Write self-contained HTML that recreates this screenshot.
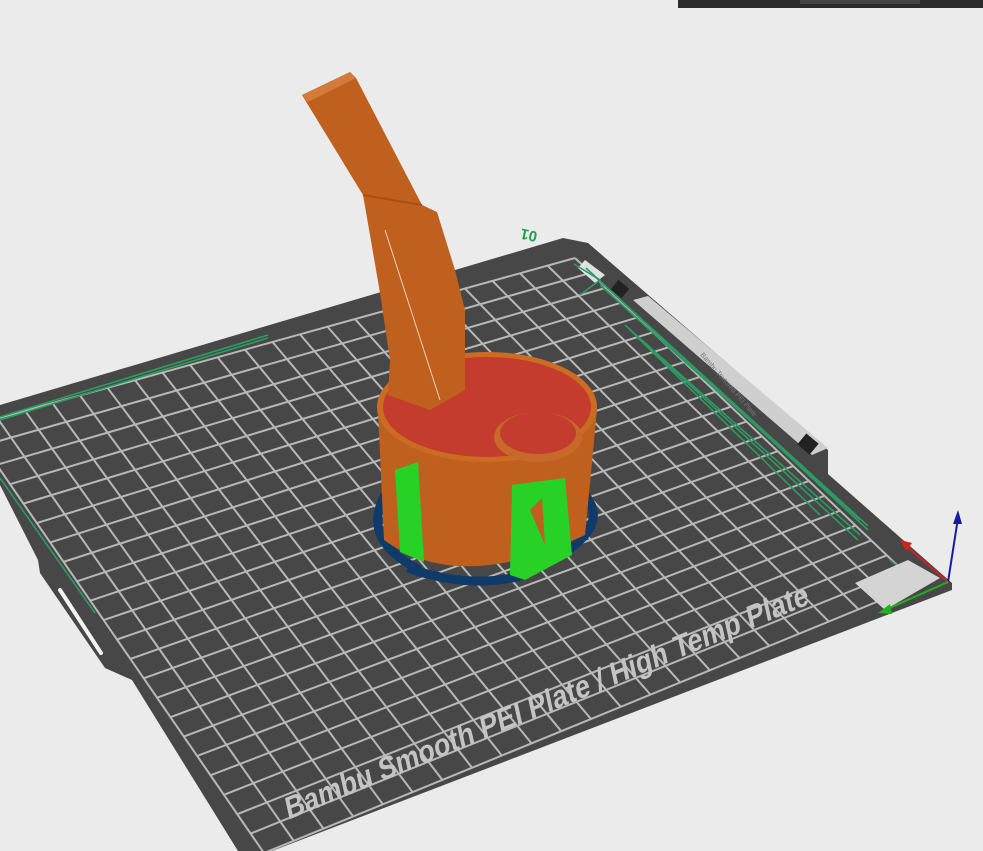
<!DOCTYPE html>
<html><head><meta charset="utf-8"><style>
html,body{margin:0;padding:0;background:#ebebeb;width:983px;height:851px;overflow:hidden}
svg{display:block}
</style></head><body>
<svg id="s" width="983" height="851" viewBox="0 0 983 851" xmlns="http://www.w3.org/2000/svg">
<rect x="0" y="0" width="983" height="851" fill="#ebebeb"/>
<rect x="678" y="0" width="305" height="8" fill="#2b2b2b"/>
<rect x="800" y="0" width="120" height="4" fill="#444"/>
<!-- plate -->
<polygon points="0,405 563,238 588,243 828,450 828,474 952,583 952,590 272,851 238,851 132,680 105,668 40,573 38,560 0,485" fill="#474747"/>
<g id="grid" stroke="#b8b8b8" stroke-width="2" fill="none"></g>
<!-- label strip -->
<polygon points="633,300 648,296 828,448 812,455" fill="#cfcfcf"/>
<text x="0" y="0" font-family="Liberation Sans,sans-serif" font-size="7" fill="#777" transform="translate(700,355) rotate(49)">Bambu Textured PEI Plate</text>
<polygon points="585,260 605,275 595,283 578,268" fill="#e0e0e0"/>
<rect x="613" y="283" width="14" height="12" fill="#222" transform="rotate(40 620 289)"/>
<rect x="800" y="437" width="16" height="14" fill="#222" transform="rotate(40 808 444)"/>
<!-- tab handle -->
<line x1="60" y1="590" x2="101" y2="653" stroke="#f2f2f2" stroke-width="4" stroke-linecap="round"/>
<!-- green skirt lines -->
<g stroke="#2d9b63" stroke-width="1.6" fill="none">
<polyline points="0,417 268,335"/>
<polyline points="0,420 268,338"/>
<polyline points="0,478 95,613"/>
<polyline points="586,268 868,530"/>
<polyline points="590,272 868,526"/>
<polyline points="600,285 860,520"/>
<polyline points="625,325 860,535"/>
<polyline points="630,330 858,540"/>
<polyline points="635,335 820,515"/>
<polyline points="574,264 600,280 580,295"/>
<polyline points="890,560 912,578"/>
</g>
<text font-family="Liberation Sans,sans-serif" font-weight="bold" font-size="15" fill="#1aa34a" transform="translate(538,232) rotate(192)">01</text>
<!-- origin patch & axes -->
<polygon points="855,583 908,560 940,578 885,610" fill="#d4d4d4"/>
<line x1="948" y1="582" x2="958" y2="518" stroke="#1a1aa0" stroke-width="2"/>
<polygon points="958,510 953,524 962,524" fill="#1a1aa0"/>
<line x1="948" y1="582" x2="905" y2="545" stroke="#d02020" stroke-width="2"/>
<polygon points="900,540 912,543 906,551" fill="#d02020"/>
<line x1="948" y1="582" x2="885" y2="610" stroke="#20b020" stroke-width="2"/>
<polygon points="878,613 890,604 892,614" fill="#20b020"/>
<!-- plate text -->
<text font-family="Liberation Sans,sans-serif" font-weight="bold" font-size="31" fill="#c4c4c4" transform="translate(288,820) rotate(-22.5) skewX(-10)" textLength="565" lengthAdjust="spacingAndGlyphs">Bambu Smooth PEI Plate / High Temp Plate</text>
<!-- model: brim -->
<path d="M385,495 Q360,540 420,570" fill="none" stroke="#0f3a6a" stroke-width="9"/>
<path d="M408,568 Q470,590 525,575" fill="none" stroke="#0f3a6a" stroke-width="9"/>
<path d="M585,495 Q610,525 560,555" fill="none" stroke="#0f3a6a" stroke-width="9"/>
<!-- cylinder body -->
<path d="M378,410 L384,540 Q460,595 585,535 L597,410 Z" fill="#c0601f"/>
<path d="M395,470 L418,462 L424,562 L400,552 Z" fill="#27d125"/>
<path d="M512,485 L565,478 L572,555 L525,580 L510,575 Z" fill="#27d125"/>
<path d="M530,510 L545,545 L542,498 Z" fill="#c0601f"/>
<ellipse cx="487" cy="407" rx="110" ry="55" fill="#cc6c22"/>
<ellipse cx="487" cy="407" rx="104" ry="50" fill="#c43c2e"/>
<ellipse cx="538" cy="437" rx="44" ry="25" fill="#c8682a"/>
<ellipse cx="538" cy="433" rx="38" ry="21" fill="#c43c2e"/>
<!-- arm -->
<path d="M302,95 L350,72 L356,78 L422,205 L437,212 L455,270 L465,310 L465,390 L430,410 L388,395 L390,360 L380,293 L370,235 L363,195 Z" fill="#c0601f"/>
<path d="M302,95 L350,72 L356,78 L308,102 Z" fill="#d47a3a"/>
<path d="M363,195 L422,205" stroke="#a94f15" stroke-width="2"/>
<line x1="385" y1="230" x2="440" y2="400" stroke="#f0d0b0" stroke-width="1"/>
</svg>
<script>
(function(){
var T=[575,258],R=[918,585],B=[264,853],L=[-30,426];
var g=document.getElementById('grid');var n=22,h='';
function P(u,v){
var x=T[0]*(1-u)*(1-v)+R[0]*u*(1-v)+L[0]*(1-u)*v+B[0]*u*v;
var y=T[1]*(1-u)*(1-v)+R[1]*u*(1-v)+L[1]*(1-u)*v+B[1]*u*v;return [x,y];}
for(var i=0;i<=n;i++){var t=i/n;
var a=P(t,0),b=P(t,1);h+='<line x1="'+a[0]+'" y1="'+a[1]+'" x2="'+b[0]+'" y2="'+b[1]+'"/>';
a=P(0,t);b=P(1,t);h+='<line x1="'+a[0]+'" y1="'+a[1]+'" x2="'+b[0]+'" y2="'+b[1]+'"/>';}
g.innerHTML=h;})();
</script>
</body></html>
